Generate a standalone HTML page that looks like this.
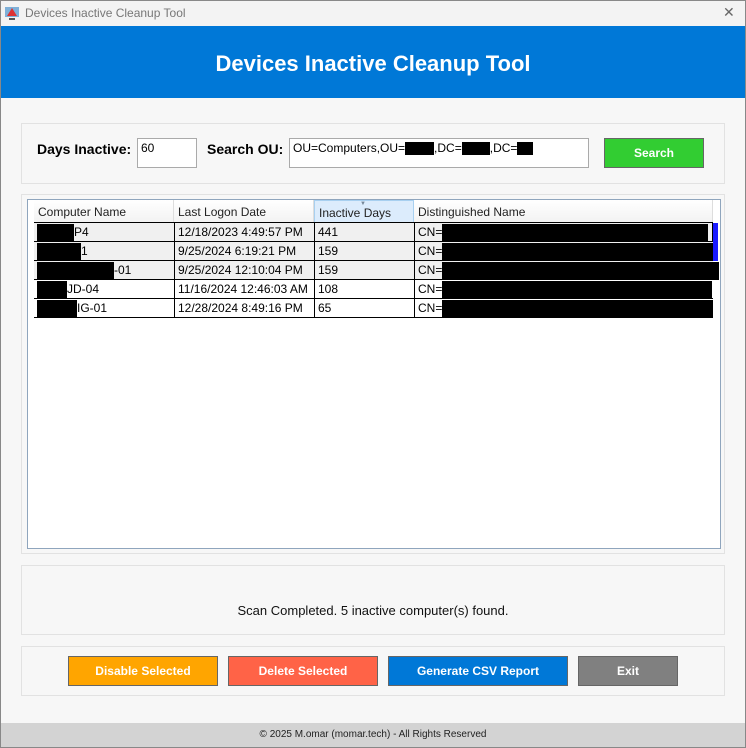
<!DOCTYPE html>
<html><head><style>
*{box-sizing:border-box;margin:0;padding:0}
body{width:746px;height:748px;background:#f7f7f7;font-family:"Liberation Sans",sans-serif;position:relative;overflow:hidden}
.a{position:absolute}
.panel{position:absolute;border:1px solid #e2e2e2;background:#f7f7f7}
.btn{position:absolute;top:656px;height:30px;border:1px solid #666;color:#fff;font-weight:bold;font-size:12px;display:flex;align-items:center;justify-content:center}
.blk{display:inline-block;background:#000;vertical-align:middle}
.row{position:absolute;left:34px;width:679px;height:19px;border-bottom:1px solid #000;font-size:12px;color:#000}
.c{position:absolute;top:0;height:19px;line-height:19px;border-left:1px solid #000;padding-left:3px;white-space:nowrap;overflow:hidden}
.h{position:absolute;top:200px;height:23px;line-height:24px;font-size:12px;color:#222;border-right:1px solid #ddd;padding-left:4px;background:linear-gradient(#fff,#f2f2f2)}
</style></head><body>
<div class="a" style="left:0;top:0;width:746px;height:26px;background:#f3f3f3"></div>
<svg class="a" style="left:4px;top:5px" width="16" height="16"><rect x="1" y="2" width="14" height="10" fill="#7fb0d8"/><polygon points="8,3 13,11 3,11" fill="#d33"/><rect x="5" y="13" width="6" height="2" fill="#555"/></svg>
<div class="a" style="left:25px;top:6px;font-size:12px;color:#777">Devices Inactive Cleanup Tool</div>
<div class="a" style="left:723px;top:4px;font-size:14px;color:#666">✕</div>
<div class="a" style="left:1px;top:26px;width:744px;height:72px;background:#0078d7;color:#fff;font-weight:bold;font-size:22px;text-align:center;line-height:76px">Devices Inactive Cleanup Tool</div>

<div class="panel" style="left:21px;top:123px;width:704px;height:61px"></div>
<div class="a" style="left:37px;top:141px;font-weight:bold;font-size:14px">Days Inactive:</div>
<div class="a" style="left:137px;top:138px;width:60px;height:30px;background:#fff;border:1px solid #aaa;font-size:12px;padding:2px 3px">60</div>
<div class="a" style="left:207px;top:141px;font-weight:bold;font-size:14px">Search OU:</div>
<div class="a" style="left:289px;top:138px;width:300px;height:30px;background:#fff;border:1px solid #aaa;font-size:12px;padding:2px 3px;white-space:nowrap">OU=Computers,OU=<span class="blk" style="width:29px;height:13px"></span>,DC=<span class="blk" style="width:28px;height:13px"></span>,DC=<span class="blk" style="width:16px;height:13px"></span></div>
<div class="btn" style="left:604px;top:138px;width:100px;height:30px;background:#32cd32">Search</div>

<div class="panel" style="left:21px;top:194px;width:704px;height:360px"></div>
<div class="a" style="left:27px;top:199px;width:694px;height:350px;background:#fff;border:1px solid #8fa5bd"></div>
<div class="h" style="left:34px;width:140px">Computer Name</div>
<div class="h" style="left:174px;width:140px">Last Logon Date</div>
<div class="h" style="left:314px;width:100px;background:#dcecfc;border:1px solid #a8d0f0">Inactive Days</div>
<div class="a" style="left:360px;top:201px;font-size:6px;color:#789">▼</div>
<div class="h" style="left:414px;width:299px">Distinguished Name</div>
<div class="a" style="left:34px;top:222px;width:679px;border-top:1px solid #000"></div>

<div class="row" style="top:223px;background:#f0f0f0"><div class="c" style="left:0;width:140px;border:0"><span class="blk" style="width:37px;height:17px"></span>P4</div><div class="c" style="left:140px;width:140px">12/18/2023 4:49:57 PM</div><div class="c" style="left:280px;width:100px">441</div><div class="c" style="left:380px;width:299px;border-right:1px solid #000">CN=<span class="blk" style="width:266px;height:18px"></span></div></div>
<div class="row" style="top:242px;background:#f0f0f0"><div class="c" style="left:0;width:140px;border:0"><span class="blk" style="width:44px;height:17px"></span>1</div><div class="c" style="left:140px;width:140px">9/25/2024 6:19:21 PM</div><div class="c" style="left:280px;width:100px">159</div><div class="c" style="left:380px;width:299px">CN=<span class="blk" style="width:272px;height:18px"></span></div></div>
<div class="row" style="top:261px;background:#f0f0f0"><div class="c" style="left:0;width:140px;border:0"><span class="blk" style="width:77px;height:17px"></span>-01</div><div class="c" style="left:140px;width:140px">9/25/2024 12:10:04 PM</div><div class="c" style="left:280px;width:100px">159</div><div class="c" style="left:380px;width:305px">CN=<span class="blk" style="width:280px;height:18px"></span></div></div>
<div class="row" style="top:280px;background:#fff"><div class="c" style="left:0;width:140px;border:0"><span class="blk" style="width:30px;height:17px"></span>JD-04</div><div class="c" style="left:140px;width:140px">11/16/2024 12:46:03 AM</div><div class="c" style="left:280px;width:100px">108</div><div class="c" style="left:380px;width:299px">CN=<span class="blk" style="width:270px;height:17px"></span></div></div>
<div class="row" style="top:299px;background:#fff"><div class="c" style="left:0;width:140px;border:0"><span class="blk" style="width:40px;height:17px"></span>IG-01</div><div class="c" style="left:140px;width:140px">12/28/2024 8:49:16 PM</div><div class="c" style="left:280px;width:100px">65</div><div class="c" style="left:380px;width:299px">CN=<span class="blk" style="width:272px;height:18px"></span></div></div>
<div class="a" style="left:713px;top:223px;width:5px;height:38px;background:#1a1aff"></div>

<div class="panel" style="left:21px;top:565px;width:704px;height:70px"></div>
<div class="a" style="left:21px;top:603px;width:704px;text-align:center;font-size:13px;color:#111">Scan Completed. 5 inactive computer(s) found.</div>

<div class="panel" style="left:21px;top:646px;width:704px;height:50px"></div>
<div class="btn" style="left:68px;width:150px;background:#ffa500">Disable Selected</div>
<div class="btn" style="left:228px;width:150px;background:#ff6347">Delete Selected</div>
<div class="btn" style="left:388px;width:180px;background:#0078d7">Generate CSV Report</div>
<div class="btn" style="left:578px;width:100px;background:#808080">Exit</div>

<div class="a" style="left:0;top:723px;width:746px;height:25px;background:#d3d3d3;text-align:center;font-size:10px;line-height:24px;color:#222">© 2025 M.omar (momar.tech) - All Rights Reserved</div>
<div class="a" style="left:0;top:0;width:746px;height:748px;border:1px solid #888;pointer-events:none"></div>
</body></html>
